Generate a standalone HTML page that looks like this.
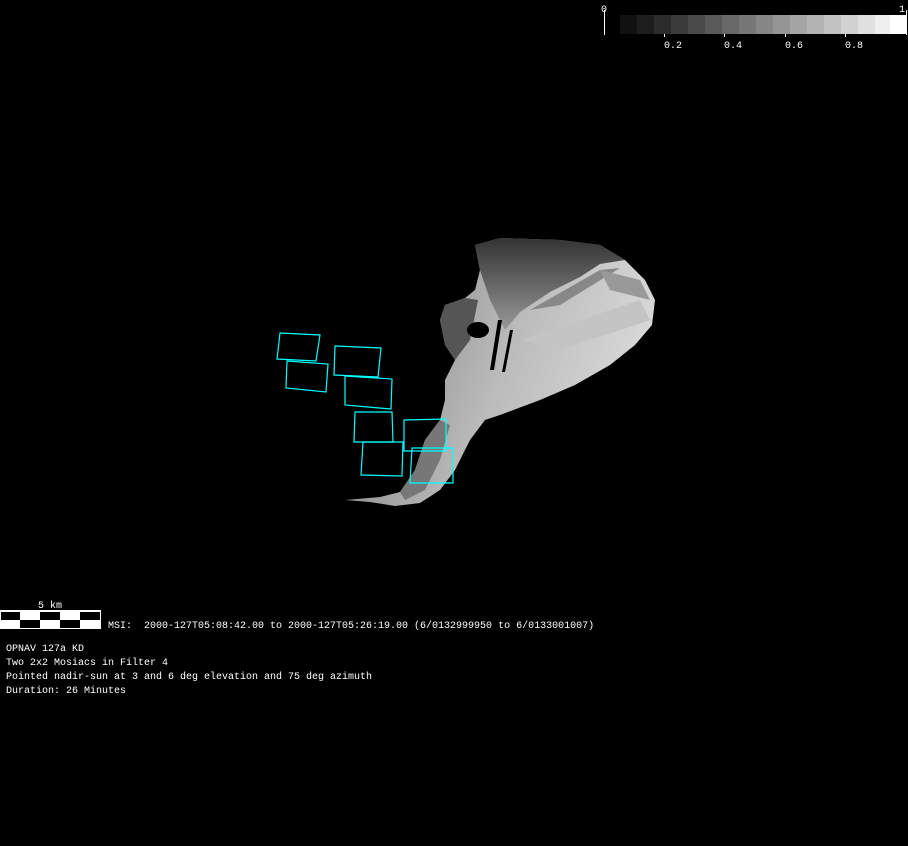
<!DOCTYPE html>
<html><head><meta charset="utf-8"><style>
html,body{margin:0;padding:0;background:#000;}
body{width:908px;height:846px;overflow:hidden;position:relative;}
svg{position:absolute;left:0;top:0;}
text{font-family:"Liberation Mono","DejaVu Sans Mono",monospace;fill:#fff;font-size:10px;white-space:pre;}
</style></head><body>
<svg width="908" height="846" viewBox="0 0 908 846" xml:space="preserve">
<defs>
<linearGradient id="g1" x1="0" y1="0" x2="1" y2="0.3">
<stop offset="0" stop-color="#333"/>
<stop offset="0.3" stop-color="#999"/>
<stop offset="0.6" stop-color="#bbb"/>
<stop offset="1" stop-color="#d8d8d8"/>
</linearGradient>
<linearGradient id="g2" x1="0" y1="0" x2="0" y2="1">
<stop offset="0" stop-color="#333"/>
<stop offset="0.5" stop-color="#666"/>
<stop offset="1" stop-color="#999"/>
</linearGradient>
</defs>
<line x1="604.5" y1="10" x2="604.5" y2="35" stroke="#fff"/>
<line x1="906.5" y1="10" x2="906.5" y2="35" stroke="#fff"/>
<g>
<rect x="620" y="15" width="18" height="19" fill="#111"/>
<rect x="637" y="15" width="18" height="19" fill="#1e1e1e"/>
<rect x="654" y="15" width="18" height="19" fill="#2c2c2c"/>
<rect x="671" y="15" width="18" height="19" fill="#3b3b3b"/>
<rect x="688" y="15" width="18" height="19" fill="#4a4a4a"/>
<rect x="705" y="15" width="18" height="19" fill="#595959"/>
<rect x="722" y="15" width="18" height="19" fill="#686868"/>
<rect x="739" y="15" width="18" height="19" fill="#777"/>
<rect x="756" y="15" width="18" height="19" fill="#868686"/>
<rect x="773" y="15" width="18" height="19" fill="#959595"/>
<rect x="790" y="15" width="18" height="19" fill="#a4a4a4"/>
<rect x="807" y="15" width="18" height="19" fill="#b3b3b3"/>
<rect x="824" y="15" width="18" height="19" fill="#c2c2c2"/>
<rect x="841" y="15" width="18" height="19" fill="#d1d1d1"/>
<rect x="858" y="15" width="18" height="19" fill="#e0e0e0"/>
<rect x="875" y="15" width="15" height="19" fill="#efefef"/>
<rect x="890" y="15" width="16" height="19" fill="#fff"/>
</g>
<line x1="664.5" y1="34" x2="664.5" y2="37" stroke="#fff"/>
<line x1="724.5" y1="34" x2="724.5" y2="37" stroke="#fff"/>
<line x1="785.5" y1="34" x2="785.5" y2="37" stroke="#fff"/>
<line x1="845.5" y1="34" x2="845.5" y2="37" stroke="#fff"/>
<text x="601" y="12">0</text>
<text x="899" y="12">1</text>
<text x="664" y="48">0.2</text>
<text x="724" y="48">0.4</text>
<text x="785" y="48">0.6</text>
<text x="845" y="48">0.8</text>

<path d="M475,245 L500,238 L560,240 L600,245 L625,260 L645,280 L655,300 L652,325 L635,345 L610,365 L575,385 L540,400 L500,415 L485,420 L470,440 L455,470 L440,490 L420,503 L395,506 L370,502 L345,500 L380,497 L400,492 L415,470 L425,440 L440,420 L445,400 L445,380 L455,360 L445,345 L440,320 L445,305 L465,298 L475,290 L480,270 Z" fill="url(#g1)"/>
<path d="M475,245 L500,238 L560,240 L600,245 L625,260 L600,264 L580,277 L550,292 L520,312 L505,330 L490,300 L480,270 Z" fill="url(#g2)"/>
<path d="M440,320 L445,305 L465,298 L478,300 L470,340 L455,360 L445,345 Z" fill="#555"/>
<path d="M425,440 L440,420 L450,425 L440,460 L425,490 L405,500 L400,492 L415,470 Z" fill="#777"/>
<path d="M530,310 L600,270 L620,268 L560,305 Z" fill="#888"/>
<path d="M600,270 L640,280 L650,300 L610,290 Z" fill="#999"/>
<path d="M520,340 L640,300 L650,320 L560,350 Z" fill="#c4c4c4"/>
<ellipse cx="478" cy="330" rx="11" ry="8" fill="#000"/>
<path d="M498,320 L502,320 L494,370 L490,370 Z" fill="#000"/>
<path d="M510,330 L513,330 L505,372 L502,372 Z" fill="#000"/>

<g fill="none" stroke="#0ff" stroke-width="1.2">
<polygon points="280,333 320,335 316,361 277,359"/>
<polygon points="287,361 328,364 326,392 286,388"/>
<polygon points="335,346 381,348 378,377 334,375"/>
<polygon points="345,376 392,379 391,409 345,405"/>
<polygon points="355,412 392,412 393,442 354,442"/>
<polygon points="363,442 403,442 402,476 361,475"/>
<polygon points="404,420 446,419 446,451 404,451"/>
<polygon points="412,448 453,448 453,483 410,483"/>
</g>

<text x="38" y="608">5 km</text>
<rect x="0.5" y="610.5" width="100" height="18" fill="#fff" stroke="#fff"/>
<rect x="1" y="612" width="19" height="8" fill="#000"/>
<rect x="40" y="612" width="20" height="8" fill="#000"/>
<rect x="80" y="612" width="20" height="8" fill="#000"/>
<rect x="20" y="620" width="20" height="8" fill="#000"/>
<rect x="60" y="620" width="20" height="8" fill="#000"/>
<text x="108" y="628">MSI:  2000-127T05:08:42.00 to 2000-127T05:26:19.00 (6/0132999950 to 6/0133001007)</text>
<text x="6" y="651">OPNAV 127a KD</text>
<text x="6" y="665">Two 2x2 Mosiacs in Filter 4</text>
<text x="6" y="679">Pointed nadir-sun at 3 and 6 deg elevation and 75 deg azimuth</text>
<text x="6" y="693">Duration: 26 Minutes</text>
</svg>
</body></html>
